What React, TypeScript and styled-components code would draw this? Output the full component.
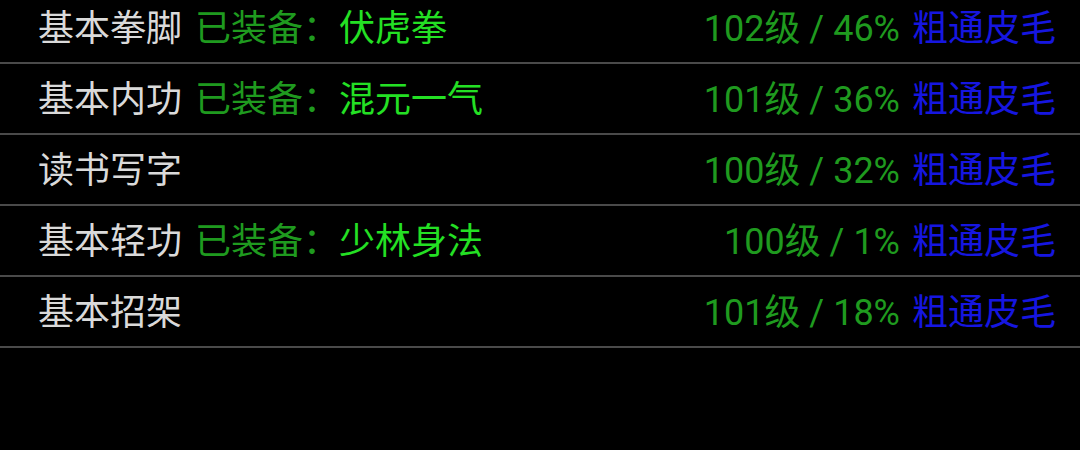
import React from "react";
import styled, { createGlobalStyle } from "styled-components";

const Global = createGlobalStyle`
  html, body { margin: 0; padding: 0; background: #000; }
  body { overflow: hidden; }
`;

const List = styled.div`
  width: 1080px;
  height: 450px;
  background: #000;
  margin-top: -7px;
  font-family: Roboto, "Noto Sans CJK SC", sans-serif;
  font-size: 36px;
  overflow: hidden;
`;

const Row = styled.div`
  display: flex;
  align-items: center;
  justify-content: space-between;
  box-sizing: border-box;
  height: 71px;
  padding: 0 24px 6px 38px;
  border-bottom: 2px solid #4a4a4a;
  white-space: nowrap;
`;

const Left = styled.div`
  display: flex;
  align-items: center;
  gap: 13px;
`;

const Name = styled.span`
  color: #dadada;
`;

const Equip = styled.span`
  color: #1f9a1f;
`;

const Skill = styled.span`
  color: #24e024;
`;

const Right = styled.div`
  display: flex;
  align-items: center;
  gap: 12px;
`;

const Level = styled.span`
  color: #1f9a1f;
`;

const Grade = styled.span`
  color: #1616e0;
`;

type Item = { name: string; equip?: string; level: string; grade: string };

const items: Item[] = [
  { name: "基本拳脚", equip: "伏虎拳", level: "102级 / 46%", grade: "粗通皮毛" },
  { name: "基本内功", equip: "混元一气", level: "101级 / 36%", grade: "粗通皮毛" },
  { name: "读书写字", level: "100级 / 32%", grade: "粗通皮毛" },
  { name: "基本轻功", equip: "少林身法", level: "100级 / 1%", grade: "粗通皮毛" },
  { name: "基本招架", level: "101级 / 18%", grade: "粗通皮毛" },
];

export default function App() {
  return (
    <>
      <Global />
      <List>
        {items.map((it) => (
          <Row key={it.name}>
            <Left>
              <Name>{it.name}</Name>
              {it.equip && (
                <span>
                  <Equip>已装备：</Equip>
                  <Skill>{it.equip}</Skill>
                </span>
              )}
            </Left>
            <Right>
              <Level>{it.level}</Level>
              <Grade>{it.grade}</Grade>
            </Right>
          </Row>
        ))}
      </List>
    </>
  );
}
